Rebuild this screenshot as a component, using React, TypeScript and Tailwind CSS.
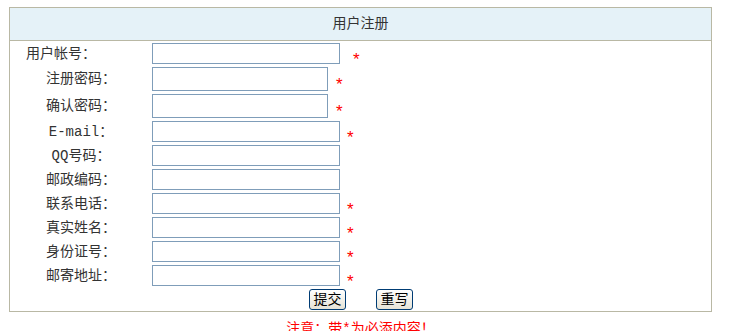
import React from 'react'

type Row = {
  label: string
  labelCls: string
  inputCls: string
  starCls?: string
}

const FONT = "font-['Liberation_Mono','Noto_Sans_CJK_SC',monospace]"

const rows: Row[] = [
  { label: '用户帐号：', labelCls: 'pl-[16px] text-left', inputCls: 'w-[188px] h-[21px]', starCls: 'ml-[13px]' },
  { label: '注册密码：', labelCls: 'text-center', inputCls: 'w-[176px] h-[24px]', starCls: 'ml-[8px]' },
  { label: '确认密码：', labelCls: 'text-center', inputCls: 'w-[176px] h-[24px]', starCls: 'ml-[8px]' },
  { label: 'E-mail：', labelCls: 'text-center', inputCls: 'w-[188px] h-[21px]', starCls: 'ml-[7px]' },
  { label: 'QQ号码：', labelCls: 'text-center', inputCls: 'w-[188px] h-[21px]' },
  { label: '邮政编码：', labelCls: 'text-center', inputCls: 'w-[188px] h-[21px]' },
  { label: '联系电话：', labelCls: 'text-center', inputCls: 'w-[188px] h-[21px]', starCls: 'ml-[7px]' },
  { label: '真实姓名：', labelCls: 'text-center', inputCls: 'w-[188px] h-[21px]', starCls: 'ml-[7px]' },
  { label: '身份证号：', labelCls: 'text-center', inputCls: 'w-[188px] h-[21px]', starCls: 'ml-[7px]' },
  { label: '邮寄地址：', labelCls: 'text-center', inputCls: 'w-[188px] h-[21px]', starCls: 'ml-[7px]' },
]

function XpButton({ children }: { children: React.ReactNode }) {
  return (
    <button
      type="button"
      className="w-[37px] h-[21px] rounded-[3px] border border-[#003c74] bg-gradient-to-b from-white to-[#e6e3d6] text-[14px] leading-none text-black flex items-center justify-center"
    >
      {children}
    </button>
  )
}

export default function App() {
  return (
    <div className={`h-[331px] overflow-hidden bg-white pt-[7px] pl-[9px] text-[14px] text-[#333] ${FONT}`}>
      <div className="w-[703px] border border-[#b9b8a4]">
        <div className="h-[33px] bg-[#e5f2f8] border-b border-[#b9b8a4] flex items-center justify-center">
          用户注册
        </div>

        <div className="flex flex-col gap-[3px] pt-[2px] pb-[1px]">
          {rows.map((r, i) => (
            <div key={i} className="flex items-center">
              <div className={`w-[142px] shrink-0 leading-none ${r.labelCls}`}>{r.label}</div>
              <input type="text" className={`border border-[#7f9db9] bg-white outline-none ${r.inputCls}`} />
              {r.starCls && (
                <span className={`text-[17px] leading-none h-[14px] translate-y-[4px] text-[#ff0000] font-['Liberation_Sans',sans-serif] ${r.starCls}`}>*</span>
              )}
            </div>
          ))}

          <div className="flex justify-center gap-[30px] pl-[1px]">
            <XpButton>提交</XpButton>
            <XpButton>重写</XpButton>
          </div>
        </div>
      </div>

      <p className="w-[703px] text-center mt-[9px] leading-[16px] text-[#ff0000]">注意：带*为必添内容！</p>
    </div>
  )
}
